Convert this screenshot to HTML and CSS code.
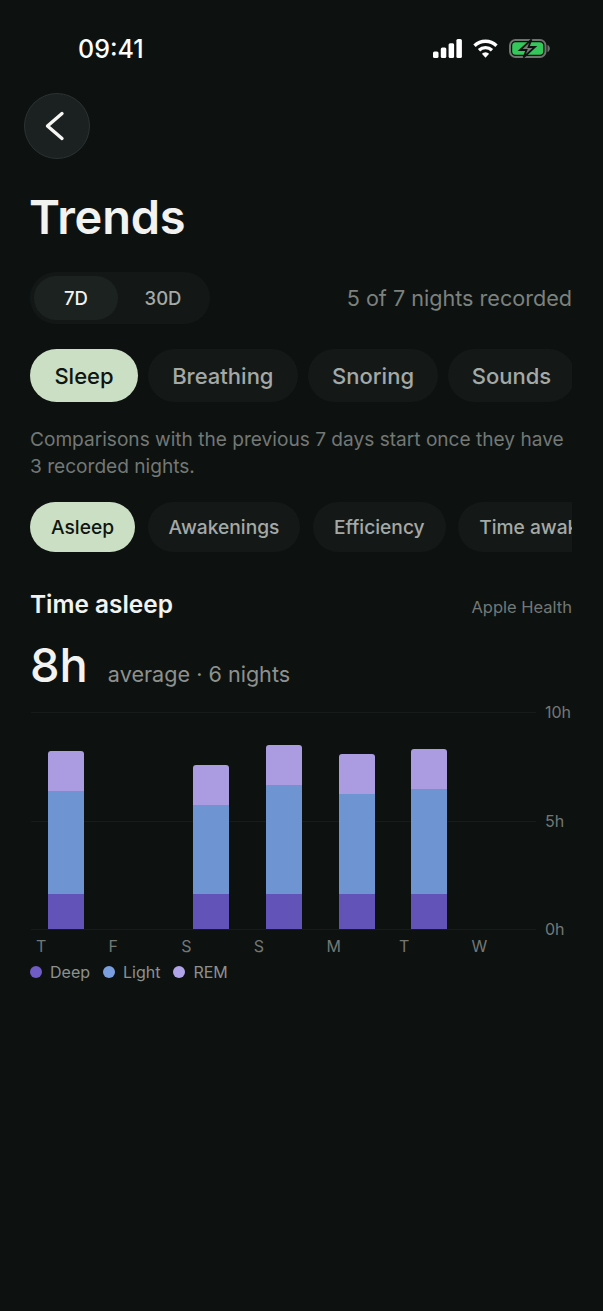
FILE: index.html
```html
<!DOCTYPE html>
<html lang="en">
<head>
  <meta charset="UTF-8" />
  <title>Trends</title>
  <link rel="stylesheet" href="styles.css">
</head>
<body>
  <div class="status-bar">
    <span class="clock">09:41</span>
    <div class="status-icons">
      <svg class="icon-signal" width="29" height="19" viewBox="0 0 29 19">
        <rect x="0" y="12.500" width="5.500" height="6.500" rx="1.500" />
        <rect x="7.800" y="8.500" width="5.500" height="10.500" rx="1.500" />
        <rect x="15.600" y="4.200" width="5.500" height="14.800" rx="1.500" />
        <rect x="23.400" y="0" width="5.500" height="19" rx="1.500" />
      </svg>
      <svg class="icon-wifi" width="25" height="19" viewBox="0 0 25 19">
        <path d="M1.500 6.700a16 16 0 0 1 22 0" />
        <path d="M6 11.200a9.600 9.600 0 0 1 13 0" />
        <path class="wifi-dot" d="M12.500 18.800l-3.600-4a5 5 0 0 1 7.200 0z" />
      </svg>
      <svg class="icon-battery" width="41" height="19" viewBox="0 0 41 19">
        <rect class="battery-case" x="1" y="1" width="35.500" height="17" rx="5.500" />
        <rect class="battery-fill" x="3.200" y="3.200" width="31" height="12.600" rx="3.500" />
        <path class="battery-tip" d="M38.500 6c1.500.6 2.300 2 2.300 3.500s-.8 2.900-2.300 3.500z" />
        <path class="battery-bolt" d="M22.500 0.500L11 11h6.500l-3 7.500L26 8h-6.500z" />
      </svg>
    </div>
  </div>

  <main class="content">
    <button class="back-btn" title="Back">
      <svg width="22" height="32" viewBox="0 0 22 32"><path d="M18 3.500L3.500 16L18 28.500" /></svg>
    </button>

    <h1>Trends</h1>

    <div class="range-row">
      <div class="range-toggle">
        <button class="range-item active">7D</button>
        <button class="range-item">30D</button>
      </div>
      <span class="nights">5 of 7 nights recorded</span>
    </div>

    <div class="chips">
      <button class="chip active">Sleep</button>
      <button class="chip">Breathing</button>
      <button class="chip">Snoring</button>
      <button class="chip tight">Sounds</button>
    </div>

    <p class="note">Comparisons with the previous 7 days start once they have 3 recorded nights.</p>

    <div class="chips small">
      <button class="chip active">Asleep</button>
      <button class="chip">Awakenings</button>
      <button class="chip">Efficiency</button>
      <button class="chip">Time awake</button>
    </div>

    <div class="section-head">
      <h2>Time asleep</h2>
      <span class="source">Apple Health</span>
    </div>

    <div class="summary">
      <span class="big">8h</span>
      <span class="avg">average · 6 nights</span>
    </div>

    <div class="chart">
      <div class="plot">
        <div class="gridline top"><span>10h</span></div>
        <div class="gridline mid"><span>5h</span></div>
        <div class="gridline bottom"><span>0h</span></div>
        <div class="bars">
          <div class="slot"><div class="bar"><div class="rem"></div><div class="light" style="height: 103px"></div><div class="deep"></div></div></div>
          <div class="slot"></div>
          <div class="slot"><div class="bar"><div class="rem"></div><div class="light" style="height: 89px"></div><div class="deep"></div></div></div>
          <div class="slot"><div class="bar"><div class="rem"></div><div class="light" style="height: 109px"></div><div class="deep"></div></div></div>
          <div class="slot"><div class="bar"><div class="rem"></div><div class="light" style="height: 100px"></div><div class="deep"></div></div></div>
          <div class="slot"><div class="bar"><div class="rem"></div><div class="light" style="height: 105px"></div><div class="deep"></div></div></div>
          <div class="slot"></div>
        </div>
      </div>
      <div class="days">
        <span>T</span><span>F</span><span>S</span><span>S</span><span>M</span><span>T</span><span>W</span>
      </div>
    </div>

    <div class="legend">
      <span class="legend-item"><i class="dot dot-deep"></i>Deep</span>
      <span class="legend-item"><i class="dot dot-light"></i>Light</span>
      <span class="legend-item"><i class="dot dot-rem"></i>REM</span>
    </div>
  </main>
</body>
</html>
```

FILE: styles.css
```css
* {
  box-sizing: border-box;
}

body {
  margin: 0;
  min-height: 1311px;
  background: #0d1211;
  color: #f2f3f1;
  font-family: Inter, 'Liberation Sans', sans-serif;
}

button {
  font-family: inherit;
  border: none;
  cursor: pointer;
}

.status-bar {
  display: flex;
  justify-content: space-between;
  align-items: center;
  height: 30px;
  margin-top: 34px;
  padding: 0 53px 0 78px;
}

.clock {
  font-size: 25px;
  font-weight: 500;
  color: #fff;
}

.status-icons {
  display: flex;
  align-items: center;
  gap: 11px;
  margin-top: -2px;
}

.icon-signal rect {
  fill: #fff;
}

.icon-wifi path {
  fill: none;
  stroke: #fff;
  stroke-width: 3.4;
}

.icon-wifi .wifi-dot {
  fill: #fff;
  stroke: none;
}

.battery-case {
  fill: none;
  stroke: #6f736f;
  stroke-width: 2;
}

.battery-fill {
  fill: #34c759;
}

.battery-tip {
  fill: #6f736f;
}

.battery-bolt {
  fill: #777b77;
  stroke: #0d1211;
  stroke-width: 1.8;
}

.content {
  padding: 0 31px 0 30px;
}

.back-btn {
  display: flex;
  align-items: center;
  justify-content: center;
  width: 66px;
  height: 66px;
  margin: 29px 0 0 -6px;
  padding: 0 4px 0 0;
  border-radius: 50%;
  background: #1b2120;
  border: 1px solid #2c3231;
}

.back-btn path {
  fill: none;
  stroke: #f5f5f3;
  stroke-width: 3.400;
  stroke-linecap: round;
  stroke-linejoin: round;
}

h1 {
  margin: 28px 0 0 -1px;
  font-size: 47px;
  line-height: 60px;
  font-weight: 600;
  letter-spacing: -0.2px;
}

.range-row {
  display: flex;
  justify-content: space-between;
  align-items: center;
  margin-top: 25px;
}

.range-toggle {
  display: flex;
  width: 180px;
  height: 52px;
  padding: 4px;
  border-radius: 26px;
  background: #131817;
}

.range-item {
  flex: 1;
  padding: 0 0 0 2px;
  border-radius: 22px;
  background: none;
  color: #a6aaa7;
  font-size: 18.500px;
  font-weight: 500;
}

.range-item.active {
  flex: none;
  width: 84px;
  padding: 0;
  background: #1b2220;
  color: #f2f3f1;
}

.nights {
  font-size: 21.600px;
  color: #7c817e;
}

.chips {
  display: flex;
  gap: 9.800px;
  margin-top: 25px;
  overflow: hidden;
}

.chip {
  flex: none;
  height: 53px;
  padding: 0 24.400px;
  border-radius: 27px;
  background: #141918;
  color: #a5a9a6;
  font-size: 22px;
  font-weight: 500;
}

.chip.tight {
  padding: 0 23.500px;
}

.chip.active {
  background: #cbdfc5;
  color: #0f1512;
}

.chips.small {
  gap: 12.500px;
  margin-top: 22px;
}

.chips.small .chip {
  height: 50px;
  padding: 0 21px;
  border-radius: 25px;
  font-size: 19.200px;
}

.note {
  margin: 24px 0 0;
  font-size: 19.100px;
  line-height: 27px;
  color: #737875;
}

.section-head {
  display: flex;
  justify-content: space-between;
  align-items: center;
  margin-top: 35px;
}

h2 {
  margin: 0;
  font-size: 24.400px;
  line-height: 34px;
  font-weight: 600;
}

.source {
  padding-top: 5px;
  font-size: 16.500px;
  color: #737875;
}

.summary {
  display: flex;
  align-items: baseline;
  gap: 20px;
  margin: 16px 0 0;
}

.big {
  font-size: 47px;
  line-height: 56px;
  font-weight: 500;
}

.avg {
  font-size: 21.600px;
  color: #8d918e;
}

.chart {
  margin-top: 19px;
}

.plot {
  position: relative;
  height: 217px;
}

.gridline {
  position: absolute;
  left: 1px;
  right: 36px;
  height: 1px;
  background: #171c1b;
}

.gridline.top {
  top: 0;
}

.gridline.mid {
  top: 109px;
}

.gridline.bottom {
  top: 217px;
}

.gridline span {
  position: absolute;
  left: calc(100% + 9px);
  top: -10px;
  font-size: 16px;
  line-height: 20px;
  color: #737875;
}

.bars {
  position: relative;
  display: grid;
  grid-template-columns: repeat(7, 72.600px);
  height: 217px;
}

.slot {
  display: flex;
  align-items: flex-end;
  padding-left: 18.300px;
}

.bar {
  display: flex;
  flex-direction: column;
  width: 36px;
  border-radius: 3px 3px 0 0;
  overflow: hidden;
}

.rem {
  height: 40px;
  background: #ab9be0;
}

.light {
  background: #6e95d2;
}

.deep {
  height: 35px;
  background: #6153b8;
}

.days {
  display: grid;
  grid-template-columns: repeat(7, 72.600px);
  margin-top: 7px;
  padding-left: 6px;
  font-size: 16px;
  line-height: 20px;
  color: #737875;
}

.legend {
  display: flex;
  gap: 13px;
  margin-top: 5px;
  font-size: 16px;
  line-height: 22px;
  color: #8d918e;
}

.legend-item {
  display: flex;
  align-items: center;
  gap: 8px;
}

.dot {
  width: 12px;
  height: 12px;
  border-radius: 50%;
}

.dot-deep {
  background: #6f5cc4;
}

.dot-light {
  background: #7a9fdf;
}

.dot-rem {
  background: #b1a3e8;
}
```
